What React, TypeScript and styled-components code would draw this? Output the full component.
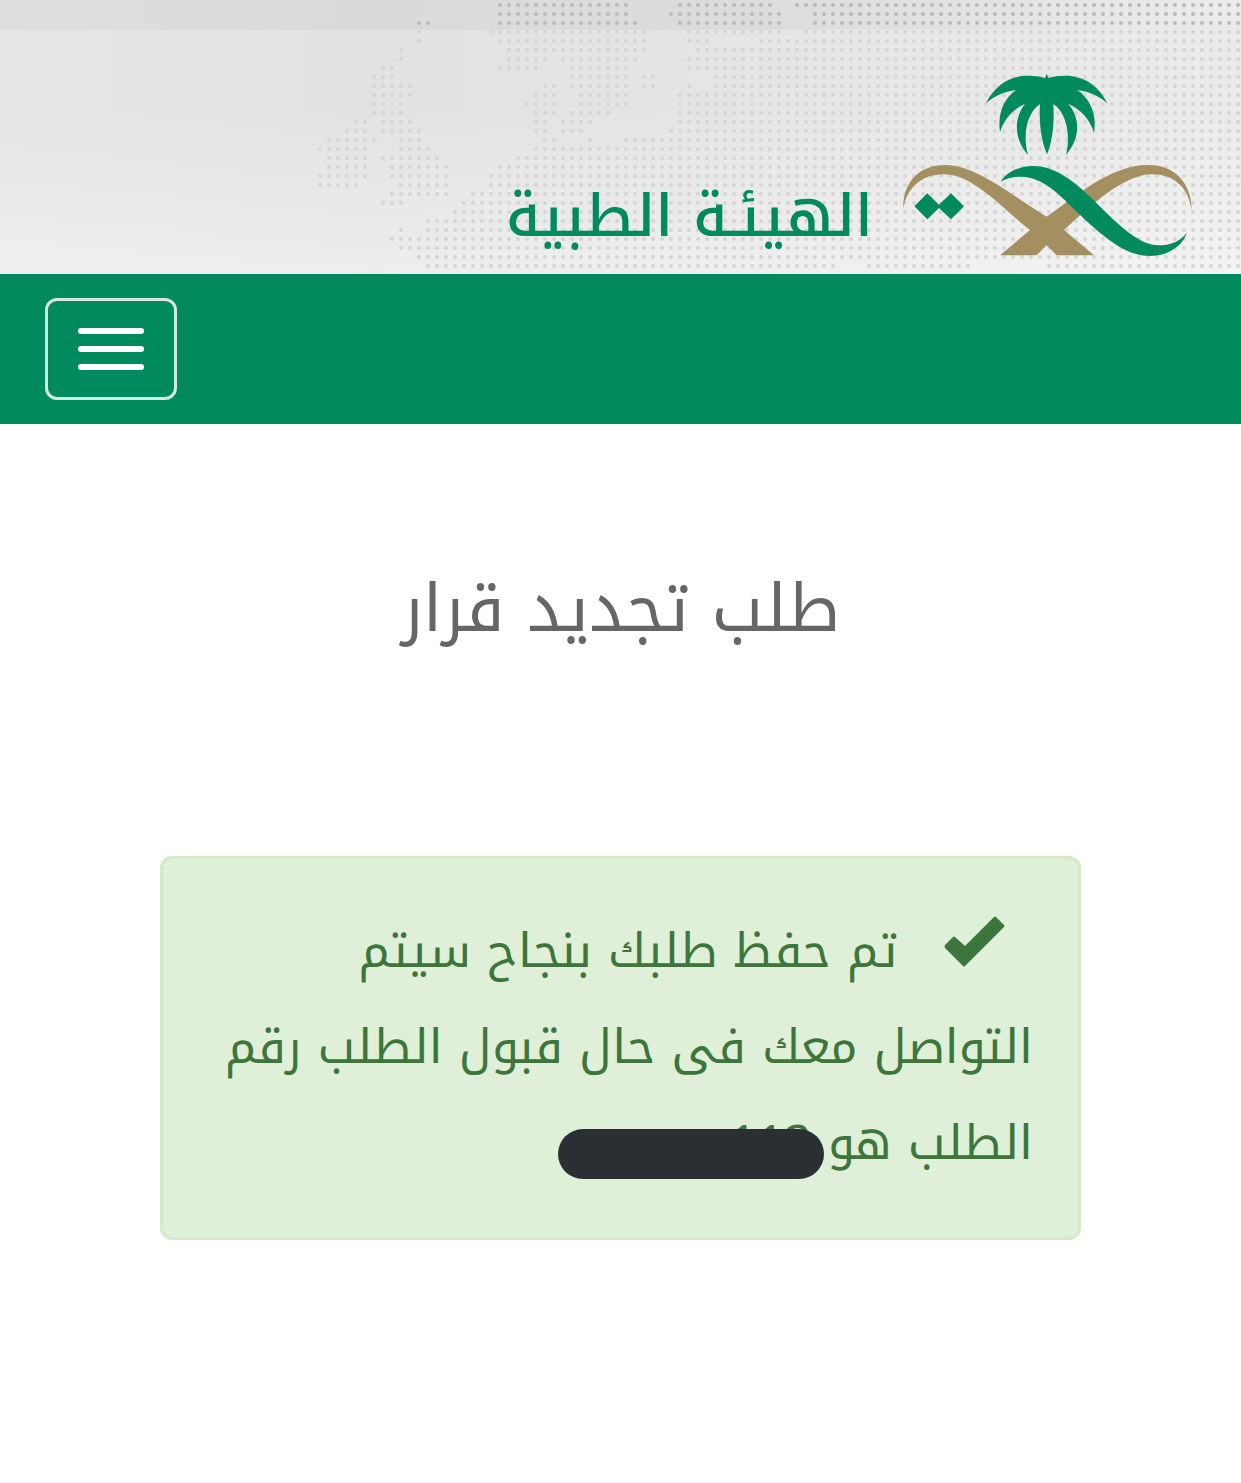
import React from "react";
import styled, { createGlobalStyle } from "styled-components";

const GREEN = "#008a5e";
const GOLD = "#a38f60";
const KUFI = '"Noto Kufi Arabic", "Droid Arabic Kufi", "DejaVu Sans", sans-serif';

const GlobalStyle = createGlobalStyle`
  *, *::before, *::after { box-sizing: border-box; }
  body { margin: 0; background: #fff; font-family: ${KUFI}; }
`;

const Page = styled.div`
  direction: rtl;
  overflow: hidden;
`;

const Header = styled.header`
  position: relative;
  display: flex;
  align-items: flex-end;
  gap: 28px;
  height: 274px;
  padding: 0 48px 17px;
  overflow: hidden;
  background:
    linear-gradient(to right, rgba(0, 0, 0, 0.03), rgba(0, 0, 0, 0.04) 60%, rgba(0, 0, 0, 0) 100%) top / 100% 30px no-repeat,
    linear-gradient(to top, rgba(255, 255, 255, 0.4), rgba(255, 255, 255, 0) 60%),
    linear-gradient(to right, #e5e5e5, #e2e2e2 30%, #e4e4e4 55%, #ebebeb);
`;

const DotMap = styled.svg`
  position: absolute;
  top: 0;
  right: 0;
`;

const Emblem = styled.svg`
  position: relative;
  flex: none;
`;

const Brand = styled.a`
  position: relative;
  color: ${GREEN};
  font-size: 58px;
  font-weight: 500;
  line-height: 80px;
  text-decoration: none;
  white-space: nowrap;
`;

const NavBar = styled.nav`
  display: flex;
  justify-content: flex-end;
  padding: 24px 45px;
  background: ${GREEN};
`;

const MenuButton = styled.button`
  display: flex;
  flex-direction: column;
  gap: 12px;
  padding: 27px 30px;
  border: 3px solid #d5e8e1;
  border-radius: 12px;
  background: transparent;
  cursor: pointer;
`;

const Bar = styled.span`
  width: 66px;
  height: 6px;
  border-radius: 3px;
  background: #fff;
`;

const Main = styled.main`
  padding: 120px 160px;
`;

const Title = styled.h1`
  margin: 0 0 182px;
  color: #666;
  font-size: 66px;
  font-weight: 400;
  line-height: 130px;
  text-align: center;
`;

const Alert = styled.div`
  padding: 44px 45px 46px;
  border: 3px solid #d6e9c6;
  border-radius: 12px;
  background: #dfefd8;
  color: #3c763d;
  font-size: 48px;
  line-height: 96px;
`;

const Message = styled.p`
  margin: 0;
`;

const Check = styled.svg`
  margin: 0 28px 0 30px;
`;

const RequestNumber = styled.span`
  position: relative;
`;

const Redaction = styled.span`
  position: absolute;
  top: 32px;
  right: -12px;
  width: 266px;
  height: 50px;
  border-radius: 25px;
  background: #2b2f33;
`;

/* Runs of dots per row of the world map: [first column, last column] */
const LAST = 137;
const STEP = 9;
const MAP_ROWS: number[][][] = [
  [[55, 69], [75, 85], [88, LAST]],
  [[55, 69], [74, 86], [90, LAST]],
  [[46, 47], [55, 70], [75, 86], [90, LAST]],
  [[46, 46], [54, 71], [76, 86], [89, LAST]],
  [[46, 46], [55, 71], [76, 78], [84, LAST]],
  [[44, 44], [56, 71], [77, LAST]],
  [[44, 44], [56, 60], [62, 70], [76, LAST]],
  [[42, 43], [55, 59], [63, 69], [76, LAST]],
  [[41, 43], [63, 69], [71, 72], [79, LAST]],
  [[41, 45], [60, 61], [63, 69], [71, 72], [76, 76], [79, LAST]],
  [[41, 45], [59, 61], [64, 69], [75, LAST]],
  [[41, 44], [58, 61], [64, 69], [75, LAST]],
  [[41, 44], [59, 61], [63, 67], [75, LAST]],
  [[39, 40], [42, 45], [59, 60], [62, 65], [75, LAST]],
  [[38, 40], [42, 46], [59, 60], [62, 64], [74, LAST]],
  [[36, 41], [44, 46], [60, 61], [65, 65], [69, LAST]],
  [[35, 40], [44, 47], [59, LAST]],
  [[36, 40], [42, 48], [57, LAST]],
  [[36, 40], [43, 49], [55, LAST]],
  [[35, 40], [43, 49], [54, LAST]],
  [[35, 39], [44, 49], [54, LAST]],
  [[43, 49], [52, LAST]],
  [[42, 44], [51, LAST]],
  [[50, LAST]],
  [[47, LAST]],
  [[44, 44], [47, LAST]],
  [[43, LAST]],
  [[44, LAST]],
  [[46, LAST]],
  [[47, 92], [96, 107], [116, LAST]],
];

const dotPath = (from: number, to: number) =>
  MAP_ROWS.slice(from, to)
    .flatMap((runs, i) =>
      runs.flatMap(([a, b]) =>
        Array.from({ length: b - a + 1 }, (_, k) => `M${5 + (a + k) * STEP} ${5 + (from + i) * STEP}h0`)
      )
    )
    .join("");

function WorldDots() {
  return (
    <DotMap width="1241" height="274" viewBox="0 0 1241 274" fill="none" strokeLinecap="round" aria-hidden="true">
      <path d={dotPath(0, 3)} stroke="#b9b9b9" strokeWidth="4" />
      <path d={dotPath(3, MAP_ROWS.length)} stroke="#d5d5d5" strokeWidth="4" />
    </DotMap>
  );
}

function Logo() {
  return (
    <Emblem width="292" height="184" viewBox="33 39 876 552" aria-hidden="true">
      <path
        fill={GREEN}
        d="M470 41L475 54C535 38 610 45 652 130C625 106 595 94 562 90C598 115 622 160 612 217C600 180 575 150 535 131C568 170 575 230 528 285C542 230 532 160 490 132C494 200 485 250 471 283C457 250 446 200 450 132C408 160 398 230 414 285C367 230 375 170 405 131C365 150 340 180 330 217C322 160 342 115 378 90C345 94 315 106 288 130C330 45 405 38 465 54Z"
      />
      <path
        fill={GOLD}
        d="M40 445C38 370 85 315 165 315C260 315 370 410 470 470C560 408 660 315 775 315C855 315 905 370 905 452C895 380 850 343 785 343C700 343 600 440 522 510L612 586H500L470 556L440 586H330L420 510C330 440 250 343 160 343C95 343 50 385 40 445Z"
      />
      <path
        fill={GREEN}
        d="M332 365C350 335 390 318 430 318C500 318 560 370 620 430C690 500 750 556 805 556C840 556 870 545 890 518C880 555 835 588 780 588C700 588 630 520 560 455C510 405 460 352 395 350C370 350 350 355 332 365Z"
      />
      <path fill={GREEN} d="M73 439L112 400L147 434L183 400L222 439L183 478L147 444L112 478Z" />
    </Emblem>
  );
}

export default function App() {
  return (
    <Page lang="ar">
      <GlobalStyle />
      <Header>
        <WorldDots />
        <Logo />
        <Brand href="#">الهيئـة الطبية</Brand>
      </Header>
      <NavBar>
        <MenuButton type="button" aria-label="القائمة">
          <Bar />
          <Bar />
          <Bar />
        </MenuButton>
      </NavBar>
      <Main>
        <Title>طلب تجديد قرار</Title>
        <Alert role="status">
          <Message>
            <Check width="61" height="51" viewBox="0 0 61 51" fill="currentColor" aria-hidden="true">
              <path d="M1 29L9 21Q10 20 11 21L21 30L50 1Q51 0 52 1L60 9Q61 10 60 11L21 50Q20 51 19 50L1 32Q0 30 1 29Z" />
            </Check>{" "}
            تم حفظ طلبك بنجاح سيتم التواصل معك فى حال قبول الطلب رقم الطلب هو{" "}
            <RequestNumber>
              112
              <Redaction />
            </RequestNumber>
          </Message>
        </Alert>
      </Main>
    </Page>
  );
}
